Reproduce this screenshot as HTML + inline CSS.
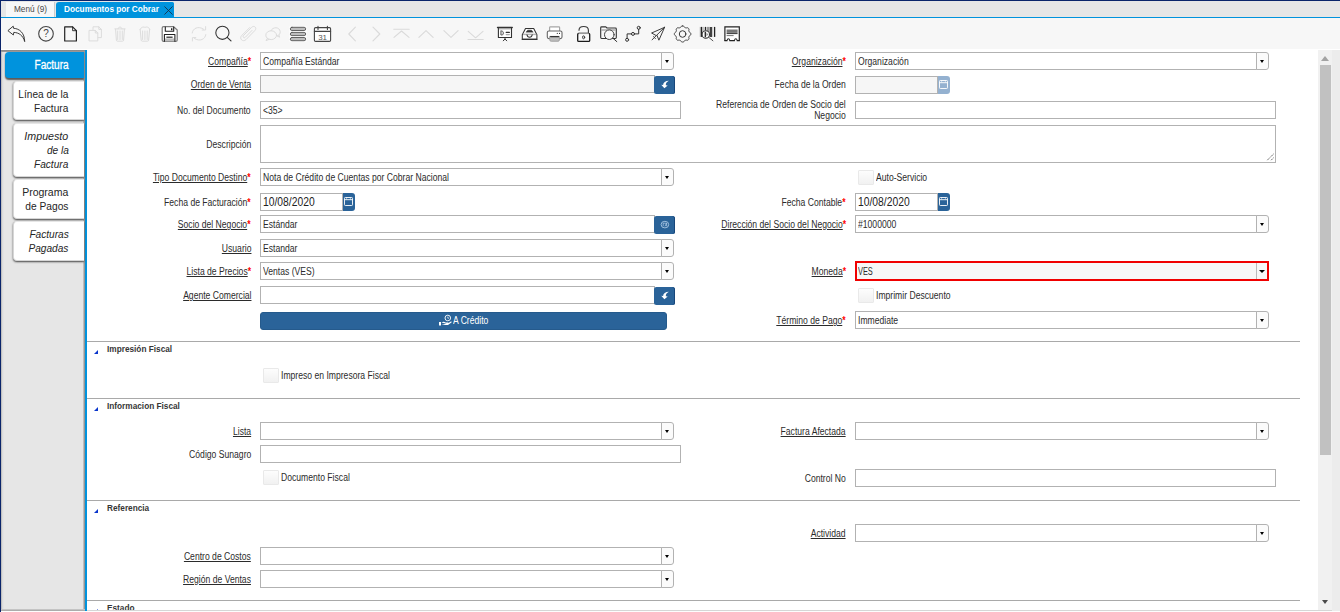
<!DOCTYPE html>
<html lang="es"><head><meta charset="utf-8"><title>Documentos por Cobrar</title>
<style>
*{box-sizing:border-box;margin:0;padding:0}
html,body{width:1340px;height:612px;overflow:hidden;background:#fff;font-family:"Liberation Sans",sans-serif;color:#333}
.a{position:absolute}
.navy{background:#0a246a}
.tabbar{left:1px;top:1px;width:1339px;height:16px;background:#e6e6e6}
.blueline{left:1px;top:17px;width:1339px;height:1px;background:#0093dd}
.toolbar{left:1px;top:18px;width:1339px;height:31px;background:#f7f7f7}
.side{left:1px;top:50px;width:84px;height:562px;background:linear-gradient(90deg,#a8a8a8 0,#d8d8d8 1px,#e6e6e6 3px,#e6e6e6 82px,#959595 83px)}
.vline{left:85px;top:50px;width:2px;height:562px;background:#0093dd}
.t{position:absolute;white-space:nowrap;line-height:12px;font-size:10px;color:#2b2b2b}
.r{transform:scaleX(.86);transform-origin:right center}
.l{transform:scaleX(.86);transform-origin:left center}
.u{text-decoration:underline}
.req{color:#f00;text-decoration:none;display:inline-block;font-weight:bold}
.in{position:absolute;height:18px;border:1px solid #b2b2b2;background:#fff}
.ro{background:#f6f6f6}
.cb{position:absolute;width:13px;height:18px;border:1px solid #b2b2b2;border-radius:0 3px 3px 0;background:#fbfbfb}
.cb:after{content:"";position:absolute;left:2.7px;top:6.8px;border:2.7px solid transparent;border-top:3px solid #000;border-bottom:0;width:0;height:0}
.bb{position:absolute;width:21px;height:18px;background:#2a6399;border-radius:2.5px;box-shadow:inset -1px 0 0 #17467a}
.db{position:absolute;width:11.5px;height:18px;background:#2a6399;border-radius:0 3px 3px 0}
.chk{position:absolute;width:16px;height:15.5px;margin-top:-.5px;border:1px solid #e9e9e9;background:linear-gradient(#fdfdfd,#f1f1f1);border-radius:1px}
.sep{position:absolute;left:87px;width:1213px;height:1px;background:#a9a9a9}
.h{position:absolute;white-space:nowrap;font-weight:bold;font-size:8.25px;line-height:10px;color:#363636;left:107px}
.tri{position:absolute;left:93.6px;width:0;height:0;margin-top:-.4px;border-left:4.4px solid transparent;border-bottom:4.4px solid #0a36cc}
.stab{position:absolute;left:13px;width:71px;background:#fff;border:1px solid #d6d6d6;border-right:0;border-top-color:#e6e6e6;border-radius:4px 0 0 4px;box-shadow:0 1px 2px #444}
.st{position:absolute;white-space:nowrap;font-size:11px;line-height:14px;right:1271.5px;color:#252525;transform:scaleX(.92);transform-origin:right center}
.i{font-style:italic}
svg{position:absolute;overflow:visible}
</style></head>
<body>
<div class="a navy" style="left:0;top:0;width:1340px;height:1px"></div>
<div class="a navy" style="left:0;top:0;width:1px;height:612px"></div>
<div class="a tabbar"></div>
<div class="a" style="left:6px;top:2px;width:49px;height:15px;background:#f7f7f7;border-right:1px solid #ccc"></div>
<div class="t" style="left:14px;top:5px;font-size:8.25px;line-height:10px;color:#484848">Menú (9)</div>
<div class="a" style="left:56px;top:2px;width:118px;height:16px;background:#0093dd;border-radius:3px 1.5px 0 0"></div>
<div class="t" style="left:64px;top:5px;font-size:8.25px;line-height:10px;color:#fff;font-weight:bold">Documentos por Cobrar</div>
<svg style="left:164px;top:6px" width="9" height="9" viewBox="0 0 10 10"><path d="M0.5 0.5L9.5 9.5M9.5 0.5L0.5 9.5" stroke="#17324a" stroke-width="1" fill="none"/></svg>
<div class="a blueline"></div>
<div class="a toolbar"></div>
<svg style="left:0;top:0" width="760" height="50" viewBox="0 0 760 50" fill="none" stroke-linecap="round" stroke-linejoin="round">
<!-- 1 undo -->
<g stroke="#333" stroke-width="0.95">
<path d="M8.2 30.4L13.2 26.2L13.6 28.3C19.5 28.6 24.6 33 24.7 41.6C23 35.5 19 32.6 13.8 32.4L13.4 34.6Z"/>
</g>
<!-- 2 help -->
<circle cx="46" cy="33.8" r="7.3" stroke="#444" stroke-width="1.1"/>
<text x="46" y="37.4" font-family="Liberation Sans, sans-serif" font-size="10" fill="#444" stroke="none" text-anchor="middle">?</text>
<!-- 3 new -->
<path d="M64.7 26.9H72.6L76.4 30.7V41H64.7Z" stroke="#222" stroke-width="1.2"/>
<path d="M72.6 26.9V30.7H76.4" stroke="#222" stroke-width="0.9"/>
<!-- 4 copy (disabled) -->
<g stroke="#dcdcdc" stroke-width="1">
<path d="M93 29.5V26.8H98.8L101.4 29.4V37.6H98.2"/>
<path d="M98.8 26.8V29.4H101.4"/>
<path d="M89.4 30.4H95.3L97.8 33V40.9H89.4Z"/>
<path d="M95.3 30.4V33H97.8"/>
</g>
<!-- 5 trash (disabled) -->
<g stroke="#dcdcdc" stroke-width="1">
<path d="M114.8 28.9H125.2M118 28.9C118 26.4 122 26.4 122 28.9"/>
<path d="M115.6 29.2L116.4 40.2C116.5 41 117 41.2 117.6 41.2H122.4C123 41.2 123.5 41 123.6 40.2L124.4 29.2"/>
<path d="M117.7 31V39.5M120 31V39.5M122.3 31V39.5"/>
</g>
<!-- 6 trash2 (disabled) -->
<g stroke="#dcdcdc" stroke-width="1">
<path d="M140 29.6C141 26.8 144 26.6 145 27.6C146.5 26.4 149.3 27 149.8 29.6"/>
<path d="M140.2 29.8L141.2 40.2C141.3 41 141.8 41.2 142.4 41.2H147.4C148 41.2 148.5 41 148.6 40.2L149.6 29.8"/>
<path d="M142.6 31V39.5M144.9 31V39.5M147.2 31V39.5"/>
</g>
<!-- 7 save -->
<path d="M163.6 26.7H173.6L177.2 30V40C177.2 40.8 176.6 41.4 175.8 41.4H163.6C162.8 41.4 162.2 40.8 162.2 40V28.1C162.2 27.3 162.8 26.7 163.6 26.7Z" fill="#fff" stroke="#7d7d7d" stroke-width="1.25"/>
<path d="M165.3 27V31.3H173.7V27" stroke="#222" stroke-width="1.1"/>
<path d="M171.7 28.2V30.2" stroke="#222" stroke-width="1.4" stroke-linecap="butt"/>
<rect x="164.9" y="38.4" width="9.5" height="2.9" fill="#bdbdbd" stroke="none"/>
<path d="M164.4 41.2V34.5H174.9V41.2" stroke="#222" stroke-width="1.1"/>
<path d="M166.4 37.2H172.6" stroke="#222" stroke-width="1.2" stroke-linecap="butt"/>
<!-- 8 refresh (disabled) -->
<g stroke="#dcdcdc" stroke-width="1">
<path d="M192.2 33C192.6 28.6 198 25.4 203.6 29.2"/>
<path d="M205.6 26.6V30H202.2"/>
<path d="M205.8 34.6C205.4 39 200 42.2 194.4 38.4"/>
<path d="M192.4 41V37.6H195.8"/>
</g>
<!-- 9 search -->
<circle cx="222.4" cy="32.8" r="6.6" stroke="#333" stroke-width="1.05"/>
<path d="M227.2 37.4L231 40.9" stroke="#333" stroke-width="1.15"/>
<!-- 10 clip (disabled) -->
<g stroke="#dcdcdc" stroke-width="1">
<path d="M252 30.4L245.4 37.2C244 38.6 242.2 36.8 243.6 35.4L251.6 27.4C254.2 24.8 257.4 28 254.8 30.6L246 39.6C243 42.6 238.6 38.6 241.8 35.4L249.6 27.6"/>
</g>
<!-- 11 chat (disabled) -->
<g stroke="#dcdcdc" stroke-width="1">
<ellipse cx="271.2" cy="35.2" rx="5.4" ry="4.4"/>
<path d="M267.4 38.4L266 40.6L269 39.4"/>
<path d="M271 30.6C272.6 26.6 279.6 26.6 280.2 31.6C280.4 33.6 279 35.4 277.4 36"/>
<path d="M279 35.2L279.6 37.2L277.6 36.2"/>
</g>
<!-- 12 bars -->
<rect x="289.4" y="26.4" width="17.2" height="15.2" fill="#fff" stroke="none"/>
<g stroke="#555" stroke-width="0.9" fill="#bdbdbd">
<rect x="290.3" y="27.3" width="15.4" height="3.2" rx="1.6"/>
<rect x="290.3" y="32.4" width="15.4" height="3.2" rx="1.6"/>
<rect x="290.3" y="37.5" width="15.4" height="3.2" rx="1.6"/>
</g>
<!-- 13 calendar -->
<rect x="314.4" y="27.6" width="16.2" height="13.8" rx="1.2" fill="#fff" stroke="#444" stroke-width="1.1"/>
<path d="M314.4 31.4H330.6M318 26.4V29.4M327.4 26.4V29.4" stroke="#444" stroke-width="1.1"/>
<text x="322.6" y="39.6" font-family="Liberation Sans, sans-serif" font-size="8" fill="#555" stroke="none" text-anchor="middle">31</text>
<!-- 14-19 nav (disabled) -->
<g stroke="#dadada" stroke-width="1.1">
<path d="M355.4 27.2L348.8 34L355.4 40.8"/>
<path d="M373 27.2L379.8 34L373 40.8"/>
<path d="M393.8 29.3H409.2M394 37.4L401.5 31L409 37.4"/>
<path d="M418.9 37.4L426 30.6L433.1 37.4"/>
<path d="M443.9 30.6L451 37.4L458.1 30.6"/>
<path d="M468.2 31.4L475.6 37.8L483 31.4M468 39.5H483.2"/>
</g>
<!-- 20 presentation -->
<g stroke="#333" stroke-width="1.1">
<path d="M498.4 28V37.5H511.5V28" fill="#fff"/>
<path d="M498.9 28.9H511" stroke="#bbb" stroke-width="1.2" stroke-linecap="butt"/>
<path d="M497.5 27.5H512.3" stroke-width="1.3"/>
<path d="M500.9 31V35H502C504 35 504 31 502 31Z" fill="#ddd" stroke="#555" stroke-width="0.9"/>
<path d="M506.2 32.4H509.4" stroke-width="1.1"/>
<path d="M506.2 34.6H509.4" stroke="#aaa" stroke-width="1.1"/>
<path d="M505 37.8V39M503.3 40.8L505 39L506.7 40.8" stroke-width="1"/>
</g>
<!-- 21 inbox -->
<g stroke="#333" stroke-width="1.05">
<path d="M522.3 34.8L525.5 28.4H533.7L536.9 34.8V39.3H522.3Z" fill="#fff"/>
<path d="M523 34.4H536.2" stroke="#b5b5b5" stroke-width="1.5" stroke-linecap="butt"/>
<path d="M526.3 31.9L527.7 30.2H531.5L532.9 31.9Z" fill="#333" stroke-width="0.6"/>
<path d="M527 34.8C527.4 38 531.8 38 532.2 34.8"/>
<path d="M522.3 39.3H536.9" stroke-width="1.3"/>
</g>
<!-- 22 printer -->
<g stroke="#666" stroke-width="1.1">
<path d="M549.6 31V27.6C549.6 27.1 550 26.8 550.5 26.8H558.7C559.2 26.8 559.6 27.1 559.6 27.6V31" fill="#fff" stroke="#a5a5a5" stroke-width="1.2"/>
<rect x="547.3" y="31" width="14.7" height="7.6" rx="1.6" fill="#fff"/>
<path d="M549.8 36.4H559.4V40C559.4 40.8 558.8 41.3 558 41.3H551.2C550.4 41.3 549.8 40.8 549.8 40Z" fill="#bdbdbd" stroke="#999" stroke-width="0.8"/>
<path d="M550.6 36.6H558.6" stroke="#333" stroke-width="1.2"/>
<circle cx="557.3" cy="33.4" r="0.55" fill="#333" stroke="none"/>
<circle cx="559.5" cy="33.4" r="0.55" fill="#333" stroke="none"/>
</g>
<!-- 23 lock open -->
<g stroke="#1a1a1a" stroke-width="1.1">
<path d="M579 30.2C579 25.2 588.4 25.2 588.4 30.2V33" stroke="#3a3a3a" stroke-width="1.15"/>
<rect x="577.7" y="33.4" width="12" height="8" rx="1" fill="#fafafa" stroke-width="1.3"/>
<path d="M578.6 33.4H588.8" stroke="#999" stroke-width="1.3" stroke-linecap="butt"/>
<ellipse cx="583.6" cy="37.3" rx="1.1" ry="1.5" stroke="#333" stroke-width="0.9" fill="#ddd"/>
</g>
<!-- 24 folder search -->
<g stroke="#333" stroke-width="1.1">
<path d="M600.7 27.7C600.7 27.2 601.1 26.9 601.6 26.9H605.8L607 28H615.4C615.9 28 616.3 28.4 616.3 28.9V37.6C616.3 38.1 615.9 38.5 615.4 38.5H601.6C601.1 38.5 600.7 38.1 600.7 37.6Z"/>
<path d="M601.4 30H615.6" stroke="#999" stroke-width="1.2" stroke-linecap="butt"/>
<circle cx="609.3" cy="34.7" r="4.8" fill="#f8f8f8" stroke="#444" stroke-width="1"/>
<path d="M613 38.3L616.8 41.6" stroke-width="1"/>
</g>
<!-- 25 workflow -->
<g stroke="#333" stroke-width="1">
<circle cx="627.1" cy="39.8" r="1.5"/>
<circle cx="633" cy="33.9" r="1.5"/>
<circle cx="638.7" cy="27.8" r="1.5"/>
<path d="M627.1 38.3V33.9H631.5M634.5 33.9H638.7V29.3"/>
</g>
<!-- 26 plane -->
<g stroke="#333" stroke-width="0.95">
<path d="M664.6 27.3L651.6 33L655.7 35.3"/>
<path d="M664.6 27.3L658.9 40.2L657.1 35.6"/>
<path d="M664.6 27.3L652.1 39.8"/>
<path d="M653.5 36.5L655.5 38.7" stroke-width="0.8"/>
</g>
<!-- 27 gear -->
<g stroke="#3a3a3a" stroke-width="1">
<path d="M682.60 25.95L682.92 25.96L683.24 26.01L683.55 26.13L683.84 26.35L684.08 26.69L684.30 27.05L684.53 27.29L684.77 27.45L685.02 27.57L685.27 27.67L685.53 27.77L685.79 27.86L686.07 27.92L686.41 27.90L686.82 27.81L687.25 27.73L687.61 27.77L687.91 27.91L688.17 28.09L688.41 28.31L688.62 28.54L688.81 28.80L688.95 29.09L688.99 29.45L688.92 29.86L688.82 30.26L688.80 30.59L688.86 30.87L688.95 31.13L689.06 31.38L689.16 31.63L689.28 31.87L689.44 32.11L689.69 32.33L690.05 32.55L690.41 32.79L690.63 33.07L690.75 33.37L690.80 33.68L690.81 34.00L690.80 34.32L690.75 34.63L690.63 34.93L690.41 35.21L690.05 35.45L689.69 35.67L689.44 35.89L689.28 36.13L689.16 36.37L689.06 36.62L688.95 36.87L688.86 37.13L688.80 37.41L688.82 37.74L688.92 38.14L688.99 38.55L688.95 38.91L688.81 39.20L688.62 39.46L688.41 39.69L688.17 39.91L687.91 40.09L687.61 40.23L687.25 40.27L686.82 40.19L686.41 40.10L686.07 40.08L685.79 40.14L685.53 40.23L685.27 40.33L685.02 40.43L684.77 40.55L684.53 40.71L684.30 40.95L684.08 41.31L683.84 41.65L683.55 41.87L683.24 41.99L682.92 42.04L682.60 42.05L682.28 42.04L681.96 41.99L681.65 41.87L681.36 41.65L681.12 41.31L680.90 40.95L680.67 40.71L680.43 40.55L680.18 40.43L679.93 40.33L679.67 40.23L679.41 40.14L679.13 40.08L678.79 40.10L678.38 40.19L677.95 40.27L677.59 40.23L677.29 40.09L677.03 39.91L676.79 39.69L676.58 39.46L676.39 39.20L676.25 38.91L676.21 38.55L676.28 38.14L676.38 37.74L676.40 37.41L676.34 37.13L676.25 36.87L676.14 36.62L676.04 36.37L675.92 36.13L675.76 35.89L675.51 35.67L675.15 35.45L674.79 35.21L674.57 34.93L674.45 34.63L674.40 34.32L674.39 34.00L674.40 33.68L674.45 33.37L674.57 33.07L674.79 32.79L675.15 32.55L675.51 32.33L675.76 32.11L675.92 31.87L676.04 31.63L676.14 31.38L676.25 31.13L676.34 30.87L676.40 30.59L676.38 30.26L676.28 29.86L676.21 29.45L676.25 29.09L676.39 28.80L676.58 28.54L676.79 28.31L677.03 28.09L677.29 27.91L677.59 27.77L677.95 27.73L678.38 27.81L678.79 27.90L679.13 27.92L679.41 27.86L679.67 27.77L679.93 27.67L680.18 27.57L680.43 27.45L680.67 27.29L680.90 27.05L681.12 26.69L681.36 26.35L681.65 26.13L681.96 26.01L682.28 25.96Z"/>
<circle cx="682.6" cy="34" r="3.3"/>
</g>
<!-- 28 barcode search -->
<g stroke="#222" stroke-linecap="butt">
<path d="M700.2 26.9V36.9" stroke="#bbb" stroke-width="0.9"/>
<path d="M701.4 26.9V36.9" stroke-width="1.3"/>
<path d="M703 26.9V36.9" stroke="#666" stroke-width="0.7"/>
<path d="M705.5 26.9V30.4" stroke-width="1.4"/>
<path d="M708.4 26.9V36.9" stroke="#999" stroke-width="2.8"/>
<path d="M711 26.9V36.9" stroke-width="1.7"/>
<path d="M712.6 26.9V36.9" stroke="#aaa" stroke-width="0.6"/>
<path d="M714.6 26.9V36.9" stroke-width="1.3"/>
<circle cx="705.8" cy="34.4" r="3.7" fill="#fff" stroke="#333" stroke-width="1.05"/>
<path d="M705.3 31.8V37" stroke-width="1.3"/>
<path d="M706.4 32.6L708.4 34.4L706.4 36.2Z" fill="#999" stroke="none"/>
<path d="M708.5 37.1L712.9 40.8" stroke="#444" stroke-width="0.9" stroke-linecap="round"/>
</g>
<!-- 29 receipt -->
<g stroke="#222" stroke-width="1.2" stroke-linejoin="miter">
<path d="M724.9 40.6V26.8H739.3V40.6" fill="#fff"/>
<path d="M724.9 40.6H727C727.6 38.2 729.2 38.2 729.8 40.6H734.4C735 38.2 736.6 38.2 737.2 40.6H739.3" stroke-width="1.1" fill="#fff"/>
<path d="M726.6 31.2H737.6" stroke="#777" stroke-width="3.4" stroke-linecap="butt"/>
<path d="M726.6 33.6H737.6" stroke="#333" stroke-width="1" stroke-linecap="butt"/>
<path d="M726.6 35.6H733.6" stroke="#666" stroke-width="0.9" stroke-linecap="butt"/>
</g>
</svg>

<div class="a side"></div>
<div class="a" style="left:1px;top:50px;width:84px;height:2px;background:linear-gradient(#858585,#a0a0a0)"></div>
<div class="a vline"></div>
<div class="a" style="left:5px;top:52px;width:79px;height:26px;background:#0093dd;border-radius:4px 0 0 4px;box-shadow:0 1.5px 1.5px #5a5a5a"></div>
<div class="st" style="top:58px;color:#fff;font-size:12px;transform:scaleX(.84);-webkit-text-stroke:.3px #fff">Factura</div>
<div class="stab" style="top:81px;height:39px"></div>
<div class="stab" style="top:123px;height:54px"></div>
<div class="stab" style="top:179px;height:40px"></div>
<div class="stab" style="top:221px;height:40px"></div>
<div class="st" style="top:87px">Línea de la</div>
<div class="st" style="top:101px">Factura</div>
<div class="st i" style="top:129px;transform:scaleX(.97)">Impuesto</div>
<div class="st i" style="top:143px">de la</div>
<div class="st i" style="top:157px">Factura</div>
<div class="st" style="top:185px;transform:scaleX(.955)">Programa</div>
<div class="st" style="top:199px;transform:scaleX(.93)">de Pagos</div>
<div class="st i" style="top:227px">Facturas</div>
<div class="st i" style="top:241px">Pagadas</div>
<div class="t r" style="right:1089px;top:56px"><span class="u">Compañía</span><span class="req">*</span></div>
<div class="in" style="left:260px;top:52px;width:402px;height:18px"></div>
<div class="cb" style="left:661px;top:52px;height:18px"></div>
<div class="t l" style="left:263px;top:56px">Compañía Estándar</div>
<div class="t r" style="right:494px;top:56px"><span class="u">Organización</span><span class="req">*</span></div>
<div class="in" style="left:855px;top:52px;width:402px;height:18px"></div>
<div class="cb" style="left:1256px;top:52px;height:18px"></div>
<div class="t l" style="left:858px;top:56px">Organización</div>
<div class="t r" style="right:1089px;top:79px"><span class="u">Orden de Venta</span></div>
<div class="in ro" style="left:260px;top:75px;width:395px"></div>
<div class="bb" style="left:654px;top:76px"></div>
<svg style="left:654px;top:76px" width="21" height="18" viewBox="0 0 21 18"><path d="M14.9 4.8C11.4 4.9 9.2 6.7 9.1 8.9L7.2 8.7L10.4 12.3L13.7 9.4L11.9 9.2C11.5 7.6 12.6 5.8 14.9 4.8Z" fill="#fff"/></svg>
<div class="t r" style="right:494px;top:79px">Fecha de la Orden</div>
<div class="in ro" style="left:855px;top:76px;width:83px"></div>
<div class="db" style="left:938px;top:76px;background:#94b1d0"></div>
<svg style="left:939.3px;top:80px" width="9" height="9" viewBox="0 0 9 9"><rect x="0.5" y="0.5" width="8" height="8" rx="0.8" fill="none" stroke="#fff" stroke-width="0.9"/><path d="M0.5 2.7H8.5" stroke="#fff" stroke-width="0.9"/><path d="M2.6 0.5V2.4M6.4 0.5V2.4" stroke="#fff" stroke-width="0.7" opacity=".7"/></svg>
<div class="t r" style="right:1089px;top:105px">No. del Documento</div>
<div class="in" style="left:260px;top:101px;width:421px;height:18px"></div>
<div class="t l" style="left:263px;top:105px">&lt;35&gt;</div>
<div class="t r" style="right:494px;top:99px">Referencia de Orden de Socio del</div>
<div class="t r" style="right:494px;top:110px">Negocio</div>
<div class="in" style="left:855px;top:101px;width:421px;height:18px"></div>
<div class="t r" style="right:1089px;top:139px">Descripción</div>
<div class="in" style="left:260px;top:125px;width:1016px;height:38px"></div>
<svg style="left:1266.3px;top:153px" width="8" height="8" viewBox="0 0 8 8"><path d="M7.5 1L1 7.5M7.5 4.8L4.8 7.5" stroke="#3a3a3a" stroke-width="0.9" stroke-dasharray="1.1 .7"/></svg>
<div class="t r" style="right:1089px;top:172px"><span class="u">Tipo Documento Destino</span><span class="req">*</span></div>
<div class="in" style="left:260px;top:168px;width:402px;height:18px"></div>
<div class="cb" style="left:661px;top:168px;height:18px"></div>
<div class="t l" style="left:263px;top:172px">Nota de Crédito de Cuentas por Cobrar Nacional</div>
<div class="chk" style="left:858px;top:170px"></div>
<div class="t l" style="left:876px;top:172px">Auto-Servicio</div>
<div class="t r" style="right:1089px;top:197px">Fecha de Facturación<span class="req">*</span></div>
<div class="in" style="left:260px;top:193px;width:83px"></div>
<div class="db" style="left:343px;top:193px;background:#2a6399"></div>
<svg style="left:344.3px;top:197px" width="9" height="9" viewBox="0 0 9 9"><rect x="0.5" y="0.5" width="8" height="8" rx="0.8" fill="none" stroke="#fff" stroke-width="0.9"/><path d="M0.5 2.7H8.5" stroke="#fff" stroke-width="0.9"/><path d="M2.6 0.5V2.4M6.4 0.5V2.4" stroke="#fff" stroke-width="0.7" opacity=".7"/></svg>
<div class="t l" style="left:263px;top:195px;font-size:12px;line-height:14px;color:#222">10/08/2020</div>
<div class="t r" style="right:494px;top:197px">Fecha Contable<span class="req">*</span></div>
<div class="in" style="left:855px;top:193px;width:83px"></div>
<div class="db" style="left:938px;top:193px;background:#2a6399"></div>
<svg style="left:939.3px;top:197px" width="9" height="9" viewBox="0 0 9 9"><rect x="0.5" y="0.5" width="8" height="8" rx="0.8" fill="none" stroke="#fff" stroke-width="0.9"/><path d="M0.5 2.7H8.5" stroke="#fff" stroke-width="0.9"/><path d="M2.6 0.5V2.4M6.4 0.5V2.4" stroke="#fff" stroke-width="0.7" opacity=".7"/></svg>
<div class="t l" style="left:858px;top:195px;font-size:12px;line-height:14px;color:#222">10/08/2020</div>
<div class="t r" style="right:1089px;top:219px"><span class="u">Socio del Negocio</span><span class="req">*</span></div>
<div class="in" style="left:260px;top:215px;width:395px"></div>
<div class="bb" style="left:654px;top:216px"></div>
<svg style="left:660px;top:220px" width="9" height="9" viewBox="0 0 9 9"><ellipse cx="4.9" cy="4.6" rx="3.8" ry="3.3" fill="none" stroke="#a9c6e3" stroke-width="0.9"/><path d="M3.2 3V6.2M6.6 3V6.2M3.2 3.2H6.6L4.9 6.4" fill="none" stroke="#a9c6e3" stroke-width="0.8"/></svg>
<div class="t l" style="left:263px;top:219px">Estándar</div>
<div class="t r" style="right:494px;top:219px"><span class="u">Dirección del Socio del Negocio</span><span class="req">*</span></div>
<div class="in" style="left:855px;top:215px;width:402px;height:18px"></div>
<div class="cb" style="left:1256px;top:215px;height:18px"></div>
<div class="t l" style="left:858px;top:219px">#1000000</div>
<div class="t r" style="right:1089px;top:243px"><span class="u">Usuario</span></div>
<div class="in" style="left:260px;top:239px;width:402px;height:18px"></div>
<div class="cb" style="left:661px;top:239px;height:18px"></div>
<div class="t l" style="left:263px;top:243px">Estandar</div>
<div class="t r" style="right:1089px;top:266px"><span class="u">Lista de Precios</span><span class="req">*</span></div>
<div class="in" style="left:260px;top:262px;width:402px;height:18px"></div>
<div class="cb" style="left:661px;top:262px;height:18px"></div>
<div class="t l" style="left:263px;top:266px">Ventas (VES)</div>
<div class="t r" style="right:494px;top:266px"><span class="u">Moneda</span><span class="req">*</span></div>
<div class="in ro" style="left:855px;top:261px;width:414px;height:20px;border:2px solid #f00000;background:#f7f7f7"></div>
<div class="a" style="left:1256px;top:263px;width:1px;height:16px;background:#bbb"></div>
<div class="a" style="left:1259px;top:270px;border:3px solid transparent;border-top:3px solid #000;border-bottom:0"></div>
<div class="t l" style="left:858px;top:266px;transform:scaleX(.74)">VES</div>
<div class="t r" style="right:1089px;top:290px"><span class="u">Agente Comercial</span></div>
<div class="in" style="left:260px;top:286px;width:395px"></div>
<div class="bb" style="left:654px;top:287px"></div>
<svg style="left:654px;top:287px" width="21" height="18" viewBox="0 0 21 18"><path d="M14.9 4.8C11.4 4.9 9.2 6.7 9.1 8.9L7.2 8.7L10.4 12.3L13.7 9.4L11.9 9.2C11.5 7.6 12.6 5.8 14.9 4.8Z" fill="#fff"/></svg>
<div class="chk" style="left:858px;top:288px"></div>
<div class="t l" style="left:876px;top:290px">Imprimir Descuento</div>
<div class="a" style="left:260px;top:312px;width:407px;height:18px;background:#2a6399;border-radius:3px;border:1px solid #255a8c"></div>
<svg style="left:439px;top:314px" width="13" height="12" viewBox="0 0 13 12"><circle cx="8.8" cy="4" r="2.8" fill="none" stroke="#fff" stroke-width="0.9"/><path d="M8.8 2.6V4.2H10" stroke="#fff" stroke-width="0.7" fill="none"/><path d="M0 8H2V11.5H0ZM2.5 8.5C4 7.5 5.5 7.8 6.5 8.5H9C9.8 8.5 9.8 9.6 9 9.6H6.5M9.5 9L11.8 7.6C12.6 7.3 13 8.2 12.4 8.6L9 11H2.5Z" fill="#fff"/></svg>
<div class="t l" style="left:453px;top:315px;color:#fff">A Crédito</div>
<div class="t r" style="right:494px;top:315px"><span class="u">Término de Pago</span><span class="req">*</span></div>
<div class="in" style="left:855px;top:311px;width:402px;height:18px"></div>
<div class="cb" style="left:1256px;top:311px;height:18px"></div>
<div class="t l" style="left:858px;top:315px">Immediate</div>
<div class="sep" style="top:341px"></div>
<div class="tri" style="top:350px"></div>
<div class="h" style="top:345px">Impresión Fiscal</div>
<div class="chk" style="left:263px;top:368px"></div>
<div class="t l" style="left:281px;top:370px">Impreso en Impresora Fiscal</div>
<div class="sep" style="top:398px"></div>
<div class="tri" style="top:407px"></div>
<div class="h" style="top:402px">Informacion Fiscal</div>
<div class="t r" style="right:1089px;top:426px"><span class="u">Lista</span></div>
<div class="in" style="left:260px;top:422px;width:402px;height:18px"></div>
<div class="cb" style="left:661px;top:422px;height:18px"></div>
<div class="t r" style="right:494px;top:426px"><span class="u">Factura Afectada</span></div>
<div class="in" style="left:855px;top:422px;width:402px;height:18px"></div>
<div class="cb" style="left:1256px;top:422px;height:18px"></div>
<div class="t r" style="right:1089px;top:449px">Código Sunagro</div>
<div class="in" style="left:260px;top:445px;width:421px;height:18px"></div>
<div class="chk" style="left:263px;top:470px"></div>
<div class="t l" style="left:281px;top:472px">Documento Fiscal</div>
<div class="t r" style="right:494px;top:473px">Control No</div>
<div class="in" style="left:855px;top:469px;width:421px;height:18px"></div>
<div class="sep" style="top:500px"></div>
<div class="tri" style="top:509px"></div>
<div class="h" style="top:504px">Referencia</div>
<div class="t r" style="right:494px;top:528px"><span class="u">Actividad</span></div>
<div class="in" style="left:855px;top:524px;width:402px;height:18px"></div>
<div class="cb" style="left:1256px;top:524px;height:18px"></div>
<div class="t r" style="right:1089px;top:551px"><span class="u">Centro de Costos</span></div>
<div class="in" style="left:260px;top:547px;width:402px;height:18px"></div>
<div class="cb" style="left:661px;top:547px;height:18px"></div>
<div class="t r" style="right:1089px;top:574px"><span class="u">Región de Ventas</span></div>
<div class="in" style="left:260px;top:570px;width:402px;height:18px"></div>
<div class="cb" style="left:661px;top:570px;height:18px"></div>
<div class="sep" style="top:600px"></div>
<div class="tri" style="top:609px"></div>
<div class="h" style="top:604px">Estado</div>
<div class="a" style="left:1318px;top:50px;width:14px;height:560px;background:#f1f1f1"></div>
<div class="a" style="left:1332px;top:50px;width:8px;height:562px;background:#ececec"></div>
<div class="a" style="left:1320px;top:65px;width:11px;height:390px;background:#c1c1c1"></div>
<div class="a" style="left:1321px;top:56px;border:4px solid transparent;border-bottom:5px solid #a3a3a3;border-top:0"></div>
<div class="a" style="left:1322px;top:600px;border:3.5px solid transparent;border-top:4.5px solid #4a4a4a;border-bottom:0"></div>
<div class="a" style="left:87px;top:610px;width:1245px;height:1px;background:#d6d6d6"></div>
<div class="a" style="left:1px;top:609px;width:84px;height:2px;background:linear-gradient(#d0d0d0,#a0a0a0)"></div>
<div class="a" style="left:1px;top:611px;width:1339px;height:1px;background:#fdfdfd"></div>
</body></html>
